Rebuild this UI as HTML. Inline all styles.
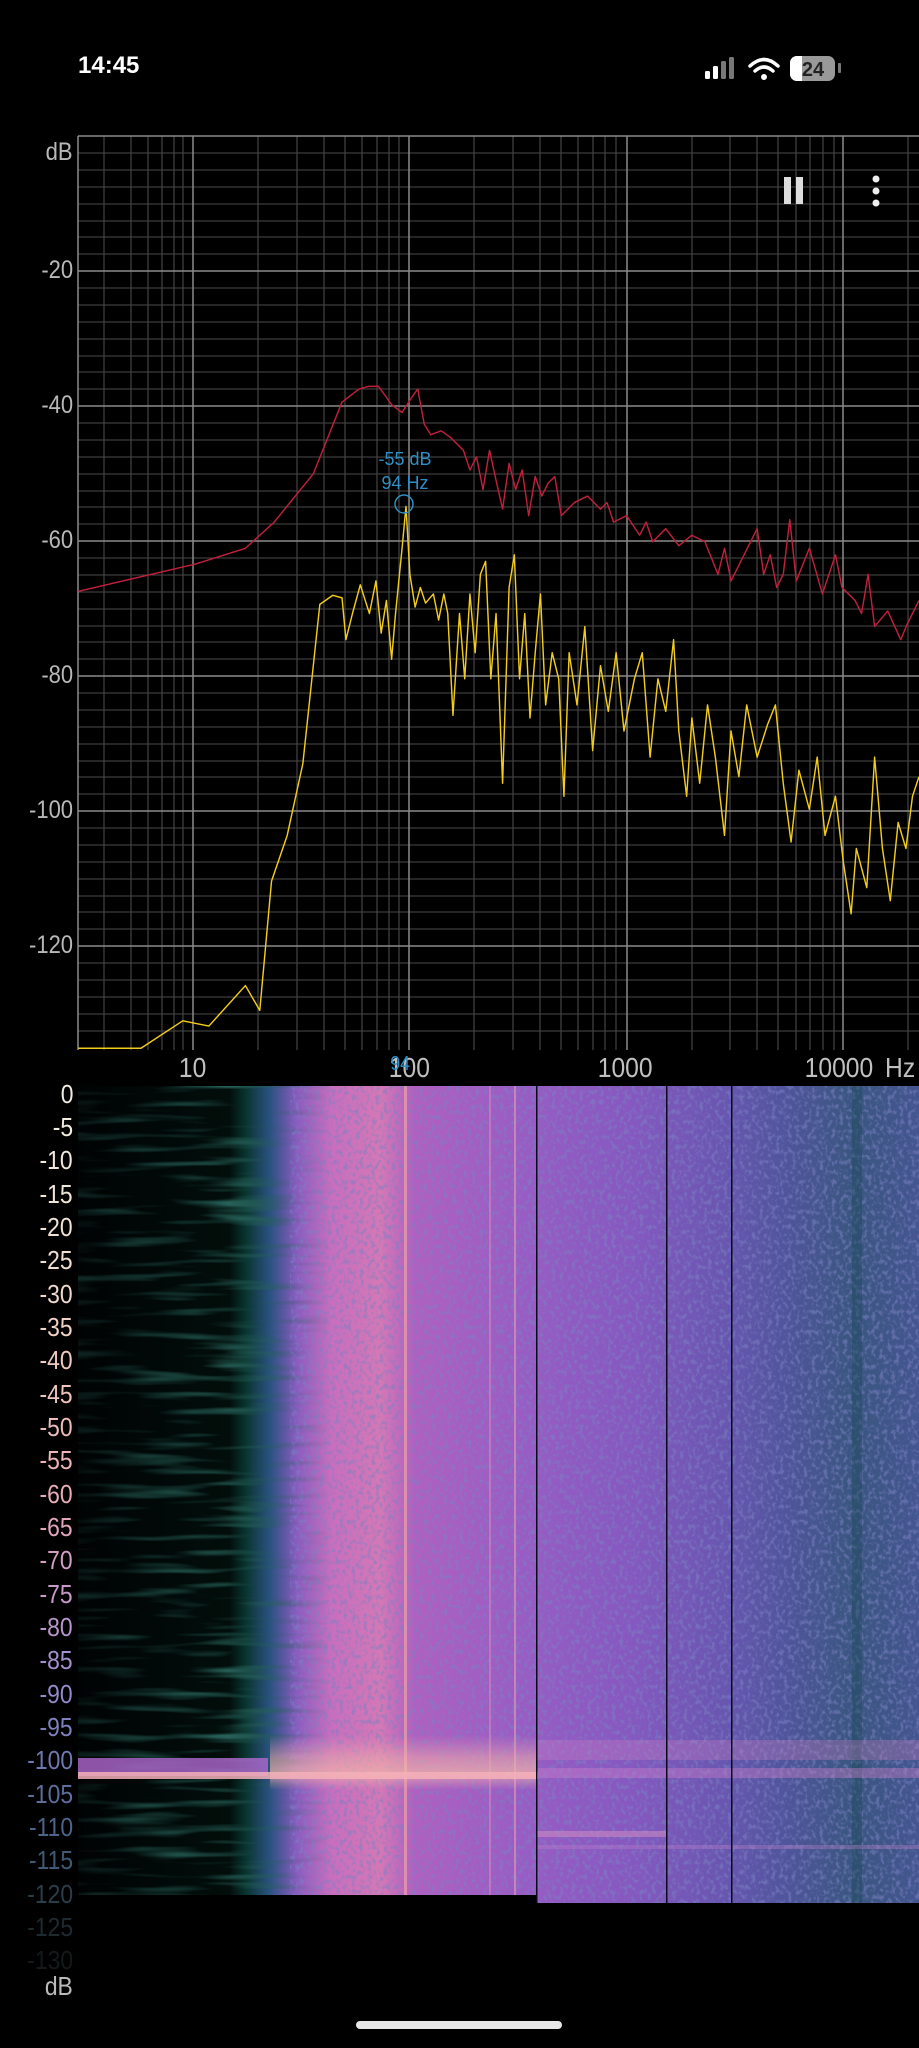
<!DOCTYPE html>
<html><head><meta charset="utf-8"><style>
html,body{margin:0;padding:0;background:#000;width:919px;height:2048px;overflow:hidden;font-family:"Liberation Sans",sans-serif}
.abs{position:absolute}
.yl{position:absolute;right:846px;font-size:25px;color:#b8b8b8;text-align:right;white-space:nowrap;transform:scaleX(0.88);transform-origin:right center;line-height:1}
.sl{position:absolute;right:846px;font-size:26px;text-align:right;line-height:1;transform:scaleX(0.88);transform-origin:right center}
.xl{position:absolute;top:1054px;font-size:28px;color:#c0c0c0;transform:scaleX(0.88);line-height:1}
</style></head><body>
<div class="abs" style="left:78px;top:52px;color:#fff;font-weight:bold;font-size:24px;">14:45</div>
<svg class="abs" style="left:700px;top:50px" width="150" height="40" viewBox="700 50 150 40">
<rect x="705" y="71" width="5" height="8" rx="1.5" fill="#fff"/>
<rect x="713" y="66" width="5" height="13" rx="1.5" fill="#fff"/>
<rect x="721" y="61" width="5" height="18" rx="1.5" fill="#777"/>
<rect x="729" y="57" width="5" height="22" rx="1.5" fill="#777"/>
<path d="M750 66 Q764 53 778 66" stroke="#fff" stroke-width="3.5" fill="none" stroke-linecap="round"/>
<path d="M755 71 Q764 63 773 71" stroke="#fff" stroke-width="3.5" fill="none" stroke-linecap="round"/>
<circle cx="764" cy="77" r="3" fill="#fff"/>
<rect x="790" y="56" width="45" height="25" rx="7" fill="#999"/>
<path d="M797 56 H802 V81 H797 A7 7 0 0 1 790 74 V63 A7 7 0 0 1 797 56Z" fill="#fff"/>
<rect x="838" y="63" width="3" height="10" rx="1" fill="#777"/>
<text x="813" y="76" font-size="20" font-weight="bold" fill="#222" text-anchor="middle" font-family="Liberation Sans">24</text>
</svg>

<svg class="abs" style="left:0;top:0" width="919" height="1090">
<g stroke="#4a4a4a" stroke-width="1">
<line x1="78" y1="153" x2="919" y2="153"/><line x1="78" y1="170" x2="919" y2="170"/><line x1="78" y1="187" x2="919" y2="187"/><line x1="78" y1="204" x2="919" y2="204"/><line x1="78" y1="221" x2="919" y2="221"/><line x1="78" y1="237" x2="919" y2="237"/><line x1="78" y1="254" x2="919" y2="254"/>
<line x1="78" y1="288" x2="919" y2="288"/><line x1="78" y1="305" x2="919" y2="305"/><line x1="78" y1="322" x2="919" y2="322"/><line x1="78" y1="339" x2="919" y2="339"/><line x1="78" y1="356" x2="919" y2="356"/><line x1="78" y1="372" x2="919" y2="372"/><line x1="78" y1="389" x2="919" y2="389"/>
<line x1="78" y1="423" x2="919" y2="423"/><line x1="78" y1="440" x2="919" y2="440"/><line x1="78" y1="457" x2="919" y2="457"/><line x1="78" y1="474" x2="919" y2="474"/><line x1="78" y1="491" x2="919" y2="491"/><line x1="78" y1="507" x2="919" y2="507"/><line x1="78" y1="524" x2="919" y2="524"/>
<line x1="78" y1="558" x2="919" y2="558"/><line x1="78" y1="575" x2="919" y2="575"/><line x1="78" y1="592" x2="919" y2="592"/><line x1="78" y1="609" x2="919" y2="609"/><line x1="78" y1="626" x2="919" y2="626"/><line x1="78" y1="642" x2="919" y2="642"/><line x1="78" y1="659" x2="919" y2="659"/>
<line x1="78" y1="693" x2="919" y2="693"/><line x1="78" y1="710" x2="919" y2="710"/><line x1="78" y1="727" x2="919" y2="727"/><line x1="78" y1="744" x2="919" y2="744"/><line x1="78" y1="761" x2="919" y2="761"/><line x1="78" y1="777" x2="919" y2="777"/><line x1="78" y1="794" x2="919" y2="794"/>
<line x1="78" y1="828" x2="919" y2="828"/><line x1="78" y1="845" x2="919" y2="845"/><line x1="78" y1="862" x2="919" y2="862"/><line x1="78" y1="879" x2="919" y2="879"/><line x1="78" y1="896" x2="919" y2="896"/><line x1="78" y1="912" x2="919" y2="912"/><line x1="78" y1="929" x2="919" y2="929"/>
<line x1="78" y1="963" x2="919" y2="963"/><line x1="78" y1="980" x2="919" y2="980"/><line x1="78" y1="997" x2="919" y2="997"/><line x1="78" y1="1014" x2="919" y2="1014"/><line x1="78" y1="1031" x2="919" y2="1031"/>
</g>
<g stroke="#444" stroke-width="1.2">
<line x1="104" y1="136" x2="104" y2="1050"/><line x1="131" y1="136" x2="131" y2="1050"/><line x1="148" y1="136" x2="148" y2="1050"/><line x1="162" y1="136" x2="162" y2="1050"/><line x1="174" y1="136" x2="174" y2="1050"/><line x1="183" y1="136" x2="183" y2="1050"/>
<line x1="258" y1="136" x2="258" y2="1050"/><line x1="297" y1="136" x2="297" y2="1050"/><line x1="324" y1="136" x2="324" y2="1050"/><line x1="345" y1="136" x2="345" y2="1050"/><line x1="362" y1="136" x2="362" y2="1050"/><line x1="377" y1="136" x2="377" y2="1050"/><line x1="389" y1="136" x2="389" y2="1050"/><line x1="399" y1="136" x2="399" y2="1050"/>
<line x1="474" y1="136" x2="474" y2="1050"/><line x1="513" y1="136" x2="513" y2="1050"/><line x1="540" y1="136" x2="540" y2="1050"/><line x1="561" y1="136" x2="561" y2="1050"/><line x1="578" y1="136" x2="578" y2="1050"/><line x1="593" y1="136" x2="593" y2="1050"/><line x1="605" y1="136" x2="605" y2="1050"/><line x1="616" y1="136" x2="616" y2="1050"/>
<line x1="692" y1="136" x2="692" y2="1050"/><line x1="730" y1="136" x2="730" y2="1050"/><line x1="757" y1="136" x2="757" y2="1050"/><line x1="778" y1="136" x2="778" y2="1050"/><line x1="796" y1="136" x2="796" y2="1050"/><line x1="810" y1="136" x2="810" y2="1050"/><line x1="823" y1="136" x2="823" y2="1050"/><line x1="834" y1="136" x2="834" y2="1050"/>
<line x1="908" y1="136" x2="908" y2="1050"/>
</g>
<g stroke="#8a8a8a" stroke-width="1.5">
<line x1="78" y1="136" x2="919" y2="136"/>
<line x1="78" y1="271" x2="919" y2="271"/><line x1="78" y1="406" x2="919" y2="406"/><line x1="78" y1="541" x2="919" y2="541"/><line x1="78" y1="676" x2="919" y2="676"/><line x1="78" y1="811" x2="919" y2="811"/><line x1="78" y1="946" x2="919" y2="946"/>
<line x1="193" y1="136" x2="193" y2="1050"/><line x1="409" y1="136" x2="409" y2="1050"/><line x1="627" y1="136" x2="627" y2="1050"/><line x1="843" y1="136" x2="843" y2="1050"/>
<line x1="78" y1="136" x2="78" y2="1050"/>
</g>
<g transform="scale(1.3054)" fill="none" stroke-width="1.1" stroke-linejoin="round">
<polyline stroke="#c0203c" points="60,453 150,432 188,420 210,400 240,363 262,308 275,298 282,296 290,296 300,310 308,316 315,305 320,298 325,325 330,333 338,330 345,335 355,345 360,360 365,350 370,375 375,345 380,368 385,390 390,355 395,375 400,360 405,395 410,365 415,380 420,370 425,365 430,395 440,385 450,380 460,390 465,385 470,400 480,395 490,410 495,400 500,415 510,405 520,418 530,410 540,415 550,440 555,420 560,445 570,425 580,405 585,440 590,425 595,450 600,440 605,398 610,445 620,420 630,455 640,425 645,450 655,460 660,470 665,440 670,480 680,468 690,490 695,478 704,460"/>
<polyline stroke="#f2cc1a" points="60,803 108,803 140,782 160,786 188,755 199,774 208,675 220,640 232,585 245,463 255,456 262,458 265,490 270,470 276,448 283,470 288,445 292,485 296,460 300,505 303,470 308,420 311,388 314,440 318,465 322,450 326,462 332,455 336,475 340,455 343,470 347,548 352,470 356,520 360,455 364,500 368,440 372,430 376,520 380,470 385,600 390,450 394,425 398,520 402,470 406,550 410,500 414,455 418,540 423,500 428,520 432,610 436,500 442,540 448,480 454,575 460,510 466,545 472,500 478,560 486,520 492,500 498,580 504,520 510,545 516,490 520,560 526,610 530,550 536,600 542,540 548,580 555,640 560,560 566,595 572,540 580,580 588,555 594,540 600,600 606,645 612,590 620,620 626,580 632,640 640,610 646,660 652,700 656,650 664,680 670,580 676,650 682,690 688,630 694,650 699,610 704,595"/>
</g>
<circle cx="404" cy="504" r="9" fill="none" stroke="#2f8fc4" stroke-width="1.5"/>
<text x="405" y="465" fill="#2f8fc4" font-size="18" text-anchor="middle" font-family="Liberation Sans">-55 dB</text>
<text x="405" y="489" fill="#2f8fc4" font-size="18" text-anchor="middle" font-family="Liberation Sans">94 Hz</text>
<rect x="784" y="177" width="7" height="27" fill="#ddd"/><rect x="796" y="177" width="7" height="27" fill="#ddd"/>
<circle cx="876" cy="179" r="3.5" fill="#eee"/><circle cx="876" cy="191" r="3.5" fill="#eee"/><circle cx="876" cy="203" r="3.5" fill="#eee"/>
</svg>

<div class="yl" style="top:140px">dB</div>
<div class="yl" style="top:258px">-20</div>
<div class="yl" style="top:393px">-40</div>
<div class="yl" style="top:528px">-60</div>
<div class="yl" style="top:663px">-80</div>
<div class="yl" style="top:798px">-100</div>
<div class="yl" style="top:933px">-120</div>
<div class="xl" style="left:177px">10</div>
<div class="xl" style="left:386px">100</div>
<div class="xl" style="left:389px;color:#2f8fc4;font-size:20px;top:1054px">94</div>
<div class="xl" style="left:594px">1000</div>
<div class="xl" style="left:800px">10000</div>
<div class="xl" style="left:883px">Hz</div>

<svg class="abs" style="left:78px;top:1086px" width="841" height="818" viewBox="78 1086 841 818">
<defs>
<linearGradient id="hg" x1="78" y1="0" x2="919" y2="0" gradientUnits="userSpaceOnUse">
<stop offset="0" stop-color="#000303"/>
<stop offset="0.18" stop-color="#020e0b"/>
<stop offset="0.2" stop-color="#0a3530"/>
<stop offset="0.228" stop-color="#2a5280"/>
<stop offset="0.26" stop-color="#8a5cc0"/>
<stop offset="0.3" stop-color="#c86ebe"/>
<stop offset="0.36" stop-color="#d478b6"/>
<stop offset="0.4" stop-color="#b060c0"/>
<stop offset="0.54" stop-color="#975cc4"/>
<stop offset="0.66" stop-color="#8558c0"/>
<stop offset="0.77" stop-color="#6856b0"/>
<stop offset="0.84" stop-color="#50559c"/>
<stop offset="0.92" stop-color="#3a5680"/>
<stop offset="1" stop-color="#445690"/>
</linearGradient>
<filter id="n1" x="0" y="0" width="1" height="1"><feTurbulence type="fractalNoise" baseFrequency="0.25 0.2" numOctaves="2" seed="3"/><feColorMatrix values="0 0 0 0 0.2  0 0 0 0 0.22  0 0 0 0 0.55  0 0 0 4 -1.9"/></filter>
<filter id="n2" x="0" y="0" width="1" height="1"><feTurbulence type="fractalNoise" baseFrequency="0.01 0.12" numOctaves="2" seed="7"/><feColorMatrix values="0 0 0 0 0.02  0 0 0 0 0.12  0 0 0 0 0.1  0 0 0 3 -1.5"/></filter>
<linearGradient id="band" x1="0" y1="1735" x2="0" y2="1790" gradientUnits="userSpaceOnUse"><stop offset="0" stop-color="#f0a0b0" stop-opacity="0"/><stop offset="0.4" stop-color="#f5b0a8" stop-opacity="0.5"/><stop offset="0.7" stop-color="#f5b8a8" stop-opacity="0.7"/><stop offset="1" stop-color="#f0a0b0" stop-opacity="0"/></linearGradient>
<linearGradient id="fade" x1="78" y1="0" x2="330" y2="0" gradientUnits="userSpaceOnUse"><stop offset="0" stop-color="#fff" stop-opacity="0.4"/><stop offset="0.6" stop-color="#fff" stop-opacity="1"/><stop offset="1" stop-color="#fff" stop-opacity="0"/></linearGradient>
<mask id="m1"><rect x="78" y="1086" width="260" height="809" fill="url(#fade)"/></mask>
</defs>
<rect x="78" y="1086" width="458" height="809" fill="url(#hg)"/>
<rect x="536" y="1086" width="383" height="817" fill="url(#hg)"/>
<rect x="290" y="1086" width="246" height="809" filter="url(#n1)" opacity="0.55"/>
<rect x="536" y="1086" width="383" height="817" filter="url(#n1)" opacity="0.55"/>
<rect x="78" y="1086" width="260" height="809" filter="url(#n2)" mask="url(#m1)"/>
<rect x="404" y="1086" width="3" height="809" fill="#f0a0a8" opacity="0.7"/>
<rect x="489" y="1086" width="2" height="809" fill="#e890b8" opacity="0.45"/>
<rect x="514" y="1086" width="2" height="809" fill="#f0a0b0" opacity="0.55"/>
<rect x="852" y="1086" width="10" height="817" fill="#1e4a5a" opacity="0.45"/>
<rect x="270" y="1735" width="266" height="55" fill="url(#band)"/>
<rect x="536" y="1740" width="383" height="20" fill="#d080c0" opacity="0.3"/>
<rect x="536" y="1768" width="383" height="10" fill="#d080c8" opacity="0.4"/>
<rect x="78" y="1758" width="190" height="18" fill="#b068d0" opacity="0.8"/>
<rect x="78" y="1772" width="460" height="7" fill="#f4b0b8" opacity="0.85"/>
<rect x="536" y="1831" width="130" height="6" fill="#d890c0" opacity="0.5"/>
<rect x="536" y="1845" width="383" height="4" fill="#c080c8" opacity="0.35"/>
<rect x="536" y="1086" width="1.5" height="817" fill="#0a0a1a"/>
<rect x="666" y="1086" width="1.5" height="817" fill="#0a0a1a"/>
<rect x="731" y="1086" width="1.5" height="817" fill="#0a0a1a"/>
</svg>

<div class="sl" style="top:1081px;color:#f0ece4">0</div>
<div class="sl" style="top:1114px;color:#f0ece0">-5</div>
<div class="sl" style="top:1147px;color:#f0e8dc">-10</div>
<div class="sl" style="top:1181px;color:#f0e6d8">-15</div>
<div class="sl" style="top:1214px;color:#f0e2d4">-20</div>
<div class="sl" style="top:1247px;color:#f0dfd0">-25</div>
<div class="sl" style="top:1281px;color:#efd8cc">-30</div>
<div class="sl" style="top:1314px;color:#efd2c6">-35</div>
<div class="sl" style="top:1347px;color:#efcac0">-40</div>
<div class="sl" style="top:1381px;color:#eec4bc">-45</div>
<div class="sl" style="top:1414px;color:#ecbcb8">-50</div>
<div class="sl" style="top:1447px;color:#eab4b8">-55</div>
<div class="sl" style="top:1481px;color:#e6acb8">-60</div>
<div class="sl" style="top:1514px;color:#e0a4bc">-65</div>
<div class="sl" style="top:1547px;color:#d49ec4">-70</div>
<div class="sl" style="top:1581px;color:#c89ac8">-75</div>
<div class="sl" style="top:1614px;color:#b896cc">-80</div>
<div class="sl" style="top:1647px;color:#a490cc">-85</div>
<div class="sl" style="top:1681px;color:#948ac8">-90</div>
<div class="sl" style="top:1714px;color:#8080c0">-95</div>
<div class="sl" style="top:1747px;color:#7078b0">-100</div>
<div class="sl" style="top:1781px;color:#5e6e9c">-105</div>
<div class="sl" style="top:1814px;color:#4c6488">-110</div>
<div class="sl" style="top:1847px;color:#3e5a74">-115</div>
<div class="sl" style="top:1881px;color:#2a3e4a">-120</div>
<div class="sl" style="top:1914px;color:#1e2a30">-125</div>
<div class="sl" style="top:1947px;color:#141a1c">-130</div>
<div class="sl" style="top:1973px;color:#bbb">dB</div>

<div class="abs" style="left:356px;top:2021px;width:206px;height:8px;border-radius:4px;background:#e8e8e8"></div>
</body></html>
